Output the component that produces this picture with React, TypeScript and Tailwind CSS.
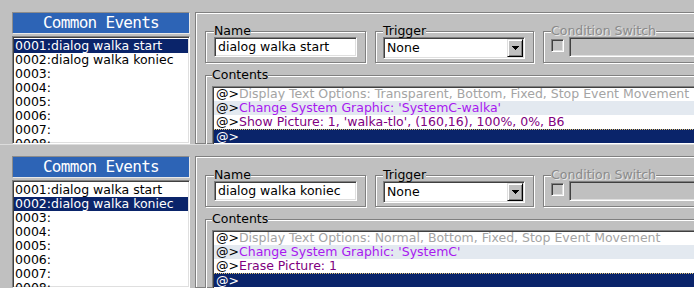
const SUNKEN =
  "border border-t-[#808080] border-l-[#808080] border-r-white border-b-white shadow-[inset_1px_1px_0_#404040,inset_-1px_-1px_0_#dfdfdf]";
const ETCHED =
  "border border-[#808080] shadow-[inset_1px_1px_0_#fff,1px_1px_0_#fff]";

interface Line {
  text: string;
  color: string;
  bg?: string;
}

interface PanelData {
  selected: number;
  name: string;
  lines: Line[];
}

const events = [
  "0001:dialog walka start",
  "0002:dialog walka koniec",
  "0003:",
  "0004:",
  "0005:",
  "0006:",
  "0007:",
  "0008:",
];

const panels: PanelData[] = [
  {
    selected: 0,
    name: "dialog walka start",
    lines: [
      { text: "Display Text Options: Transparent, Bottom, Fixed, Stop Event Movement", color: "text-[#a4a4a4]" },
      { text: "Change System Graphic: 'SystemC-walka'", color: "text-[#a818f0]", bg: "bg-[#e3e9f0]" },
      { text: "Show Picture: 1, 'walka-tlo', (160,16), 100%, 0%, B6", color: "text-[#800080]" },
    ],
  },
  {
    selected: 1,
    name: "dialog walka koniec",
    lines: [
      { text: "Display Text Options: Normal, Bottom, Fixed, Stop Event Movement", color: "text-[#a4a4a4]" },
      { text: "Change System Graphic: 'SystemC'", color: "text-[#a818f0]", bg: "bg-[#e3e9f0]" },
      { text: "Erase Picture: 1", color: "text-[#800080]" },
    ],
  },
];

const GroupBox = ({
  label,
  disabled,
  className,
  children,
}: {
  label: string;
  disabled?: boolean;
  className: string;
  children: React.ReactNode;
}) => (
  <fieldset className={`${ETCHED} flex-none ${className}`}>
    <legend
      className={`bg-[#c0c0c0] leading-[12px] ${
        disabled ? "text-[#8a8a8a] [text-shadow:1px_1px_0_#e8e8e8]" : "text-black"
      }`}
    >
      {label}
    </legend>
    {children}
  </fieldset>
);

const Panel = ({ data, topLine }: { data: PanelData; topLine?: boolean }) => {
  return (
    <div
      className={`flex h-[144px] w-[694px] flex-none overflow-hidden bg-[#c0c0c0] pl-[12px] pt-[12px] ${
        topLine ? "shadow-[inset_0_1px_0_#dcdcdc]" : ""
      }`}
    >
      {/* Left column — event list */}
      <div className="flex w-[178px] flex-none flex-col">
        <div className="flex h-[22px] items-center justify-center border border-t-[#8c8c8c] border-l-[#8c8c8c] border-r-[#e8e8e8] border-b-[#e8e8e8] bg-[#2d64b6]">
          <span className="font-['DejaVu_Sans_Mono',monospace] text-[16px] leading-[20px] tracking-[-0.7px] text-white">
            Common Events
          </span>
        </div>
        <div className={`${SUNKEN} mt-[2px] h-[120px] overflow-hidden bg-white px-[1px] pt-[2px]`}>
          {events.map((ev, i) => (
            <div
              key={ev}
              className={`h-[14px] pl-[1px] leading-[14px] ${
                i === data.selected ? "bg-[#0a246a] text-white" : "text-black"
              }`}
            >
              {ev}
            </div>
          ))}
        </div>
      </div>

      {/* Right frame */}
      <div className={`ml-[5px] w-[560px] flex-none ${ETCHED} pl-[9px] pt-[12px]`}>
        <div className="flex gap-[9px]">
          <GroupBox label="Name" className="h-[38px] w-[160px] px-[8px]">
            <div className={`${SUNKEN} flex h-[20px] w-[143px] items-center bg-white pl-[3px]`}>
              {data.name}
            </div>
          </GroupBox>
          <GroupBox label="Trigger" className="h-[38px] w-[159px] px-[7px]">
            <div className={`${SUNKEN} flex h-[22px] w-[142px] items-center bg-white pl-[3px]`}>
              <span className="flex-1">None</span>
              <div className="mr-[1px] flex h-[18px] w-[16px] items-center justify-center border border-t-[#dfdfdf] border-l-[#dfdfdf] border-r-black border-b-black bg-[#c0c0c0] shadow-[inset_1px_1px_0_#fff,inset_-1px_-1px_0_#808080]">
                <svg width="7" height="4" viewBox="0 0 7 4">
                  <path d="M0 0h7v1H0zM1 1h5v1H1zM2 2h3v1H2zM3 3h1v1H3z" fill="#000" />
                </svg>
              </div>
            </div>
          </GroupBox>
          <GroupBox label="Condition Switch" disabled className="h-[38px] w-[200px] px-[7px]">
            <div className="flex items-start gap-[5px]">
              <div className={`${SUNKEN} mt-[2px] h-[13px] w-[13px] flex-none bg-[#c0c0c0]`} />
              <div className={`${SUNKEN} h-[20px] flex-1 bg-[#c0c0c0]`} />
            </div>
          </GroupBox>
        </div>

        <GroupBox label="Contents" className="mt-[6px] w-[540px] pl-[6px] pt-[5px]">
          <div className={`${SUNKEN} h-[60px] overflow-hidden bg-white`}>
            <div className="pl-[1px]">
              {data.lines.map((l, i) => (
                <div key={i} className={`h-[14px] whitespace-nowrap pl-[2px] leading-[14px] ${l.bg ?? ""}`}>
                  <span className="text-black">@&gt;</span>
                  <span className={l.color}>{l.text}</span>
                </div>
              ))}
              <div className="h-[14px] border-t border-dotted border-[#e0c070] bg-[#0a246a] pl-[2px] leading-[13px] text-white">
                @&gt;
              </div>
            </div>
          </div>
        </GroupBox>
      </div>
    </div>
  );
};

export default function App() {
  return (
    <div className="flex h-[288px] w-[694px] flex-col overflow-hidden bg-[#c0c0c0] font-['DejaVu_Sans',sans-serif] text-[12.5px]">
      <Panel data={panels[0]} />
      <Panel data={panels[1]} topLine />
    </div>
  );
}
